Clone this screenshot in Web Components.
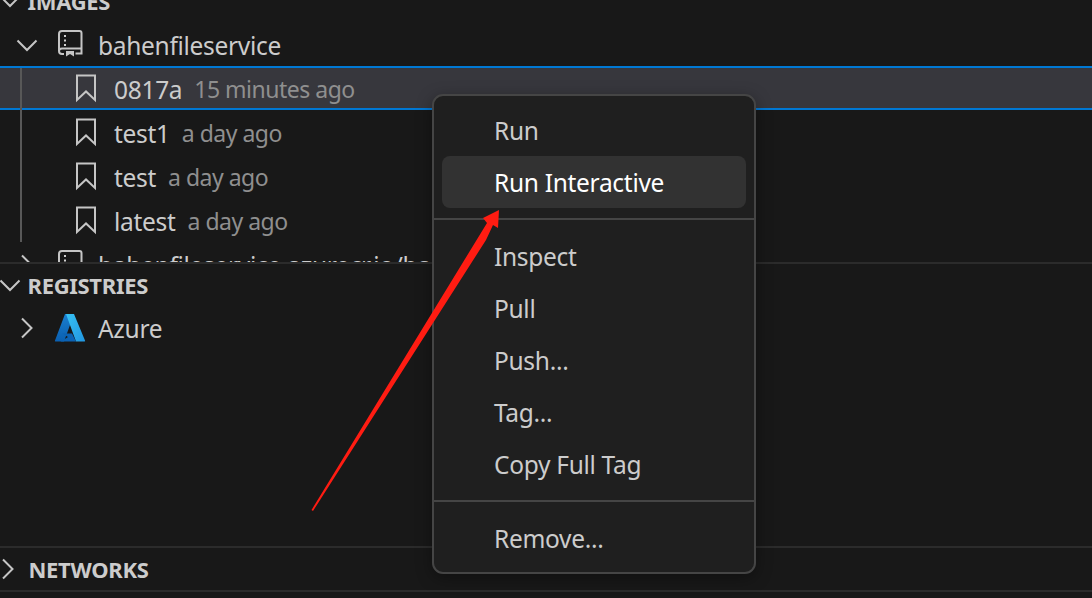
<!DOCTYPE html>
<html><head><meta charset="utf-8">
<style>
html,body{margin:0;padding:0;background:#181818;overflow:hidden}
body{font-family:"Noto Sans","Open Sans",sans-serif;color:#ccc}
</style></head>
<body>
<template id="ico-chev-d"><svg style="overflow:visible" width="22" height="22" viewBox="0 0 22 22" fill="none" stroke="currentColor" stroke-width="2"><path d="M1.500 6.500 11 16 20.500 6.500"/></svg></template>
<template id="ico-chev-r"><svg style="overflow:visible" width="22" height="22" viewBox="0 0 22 22" fill="none" stroke="currentColor" stroke-width="2"><path d="M6 1.500 15.500 11 6 20.500"/></svg></template>
<template id="ico-book"><svg style="overflow:visible" width="26" height="28" viewBox="0 2 26 28" fill="none" stroke="#c5c5c5" stroke-width="2"><path d="M2 22V5q0-3 3-3h17.500q2 0 2 2v20.500h-6"/><path d="M2 22q0-2.500 3-2.500h19.500"/><path d="M2 22q0 3 3 3h2"/><path d="M9 22h8v5.500l-4-2.500-4 2.500z" fill="#c5c5c5" stroke="none"/><path d="M8 6v2M8 10.500v2M8 15v2" stroke="#d0d0d0" stroke-width="2"/></svg></template>
<template id="ico-bookmark"><svg style="overflow:visible" width="22" height="28" viewBox="0 0 22 28" fill="none" stroke="#c5c5c5" stroke-width="2"><path d="M2 .5H20V25L11 16.500 2 25Z" stroke-linejoin="miter"/></svg></template>
<template id="ico-azure"><svg width="32" height="30" viewBox="0 0 32 30"><defs><linearGradient id="az1" x1="0" y1="0" x2="0" y2="1"><stop offset="0" stop-color="#1a7fd0"/><stop offset="1" stop-color="#0a5fb0"/></linearGradient><linearGradient id="az2" x1="0" y1="0" x2="1" y2="1"><stop offset="0" stop-color="#37c2f5"/><stop offset="1" stop-color="#2196e0"/></linearGradient></defs><path d="M11 1H20L10 28.500H1.500Q0.500 28.500 1 27.500Z" fill="url(#az1)"/><path d="M20 1H12L22 28.500H30.500Q31.500 28.500 31 27.500Z" fill="url(#az2)"/><path d="M8 20.500H18L22 28.500H6.500L14 24Z" fill="#0b62b4"/></svg></template>

<script>
const icon=id=>document.getElementById(id).content.cloneNode(true);
class ViewPane extends HTMLElement{
  constructor(){super();this.attachShadow({mode:'open'}).innerHTML=`<style>
  :host{display:block;overflow:hidden;box-sizing:border-box;border-bottom:2px solid #2b2b2b;flex:none}
  </style><slot></slot>`;}
}
class ViewHeader extends HTMLElement{
  constructor(){super();this.attachShadow({mode:'open'}).innerHTML=`<style>
  :host{display:flex;align-items:center;height:44px;color:#ccc;font-weight:700;font-size:22px;letter-spacing:-.3px;text-transform:uppercase}
  .t{width:28.500px;flex:none;display:flex;color:#c5c5c5;margin-left:-1px}
  :host([collapsed]) .t{margin-left:-3px;width:31.500px}
  </style><span class="t"></span><span><slot></slot></span>`;}
  connectedCallback(){const t=this.shadowRoot.querySelector('.t');if(!t.firstChild)t.append(icon(this.hasAttribute('collapsed')?'ico-chev-r':'ico-chev-d'));}
}
class TreeRow extends HTMLElement{
  constructor(){super();this.attachShadow({mode:'open'}).innerHTML=`<style>
  :host{display:flex;align-items:center;height:44px;box-sizing:border-box;white-space:nowrap;color:#ccc;font-size:24.500px;letter-spacing:-.3px;padding-left:16px;position:relative;isolation:isolate}
  :host([level="2"]){padding-left:32px}
  :host([selected])::before{content:"";position:absolute;left:0;right:0;top:-1px;bottom:1px;background:#37373d;box-shadow:inset 0 2px 0 #0078d4,inset 0 -2px 0 #0078d4;z-index:-1}
  .t{width:22px;height:22px;flex:none;color:#c5c5c5;display:flex}
  .i{width:32px;margin-left:16px;flex:none;display:flex;justify-content:center}
  .l{margin-left:12px}
  .d{margin-left:12px;color:#8f8f8f;font-size:23px;letter-spacing:-.5px}
  </style><span class="t"></span><span class="i"></span><span class="l"><slot></slot></span><span class="d"><slot name="desc"></slot></span>`;}
  connectedCallback(){
    const s=this.shadowRoot,t=s.querySelector('.t'),i=s.querySelector('.i');
    if(i.firstChild)return;
    const tw=this.getAttribute('twistie');
    if(tw)t.append(icon('ico-chev-'+tw));
    i.append(icon('ico-'+this.getAttribute('icon')));
  }
}
class TreeGroup extends HTMLElement{
  constructor(){super();this.attachShadow({mode:'open'}).innerHTML=`<style>
  :host{display:block;position:relative}
  .guide{position:absolute;left:20px;top:1px;bottom:1px;width:2px;background:#585858;z-index:1}
  </style><span class="guide"></span><slot></slot>`;}
}
class ContextMenu extends HTMLElement{
  constructor(){super();this.attachShadow({mode:'open'}).innerHTML=`<style>
  :host{display:block;position:absolute;left:432px;top:94px;width:324px;height:480px;box-sizing:border-box;padding:8px;background:#1f1f1f;border:2px solid #454545;border-radius:11px;box-shadow:0 4px 16px rgba(0,0,0,.36);z-index:5}
  </style><slot></slot>`;}
}
class MenuItem extends HTMLElement{
  constructor(){super();this.attachShadow({mode:'open'}).innerHTML=`<style>
  :host{display:flex;align-items:center;height:52px;padding-left:52px;border-radius:8px;color:#ccc;font-size:24.500px;letter-spacing:-.3px}
  :host([active]){background:#323232;color:#fff}
  </style><slot></slot>`;}
}
class MenuSep extends HTMLElement{
  constructor(){super();this.attachShadow({mode:'open'}).innerHTML=`<style>
  :host{display:block;height:2px;margin:10px -8px;background:#454545}
  </style>`;}
}
class RedArrow extends HTMLElement{
  constructor(){super();this.attachShadow({mode:'open'}).innerHTML=`<style>
  :host{display:block;position:absolute;left:300px;top:200px;width:210px;height:320px;z-index:6;pointer-events:none}
  </style><svg width="210" height="320" viewBox="300 200 210 320"><path d="M311.500 510 487 223 483 218 499 210 498 228 493 225 486 240 313 511Z" fill="#ff1c12"/></svg>`;}
}
[['view-pane',ViewPane],['view-header',ViewHeader],['tree-row',TreeRow],['tree-group',TreeGroup],['context-menu',ContextMenu],['menu-item',MenuItem],['menu-sep',MenuSep],['red-arrow',RedArrow]].forEach(([n,c])=>customElements.define(n,c));
</script>

<view-pane style="height:285px;margin-top:-21px">
  <view-header>Images</view-header>
  <tree-row level="1" twistie="d" icon="book">bahenfileservice</tree-row>
  <tree-group>
    <tree-row level="2" icon="bookmark" selected>0817a<span slot="desc">15 minutes ago</span></tree-row>
    <tree-row level="2" icon="bookmark">test1<span slot="desc">a day ago</span></tree-row>
    <tree-row level="2" icon="bookmark">test<span slot="desc">a day ago</span></tree-row>
    <tree-row level="2" icon="bookmark">latest<span slot="desc">a day ago</span></tree-row>
  </tree-group>
  <tree-row level="1" twistie="r" icon="book">bahenfileservice.azurecr.io/bahenfileservice</tree-row>
</view-pane>
<view-pane style="height:284px">
  <view-header style="height:42px">Registries</view-header>
  <tree-row level="1" twistie="r" icon="azure">Azure</tree-row>
</view-pane>
<view-pane style="height:44px">
  <view-header collapsed style="height:42px">Networks</view-header>
</view-pane>

<context-menu>
  <menu-item>Run</menu-item>
  <menu-item active>Run Interactive</menu-item>
  <menu-sep></menu-sep>
  <menu-item>Inspect</menu-item>
  <menu-item>Pull</menu-item>
  <menu-item>Push...</menu-item>
  <menu-item>Tag...</menu-item>
  <menu-item>Copy Full Tag</menu-item>
  <menu-sep></menu-sep>
  <menu-item>Remove...</menu-item>
</context-menu>
<red-arrow></red-arrow>
</body></html>
